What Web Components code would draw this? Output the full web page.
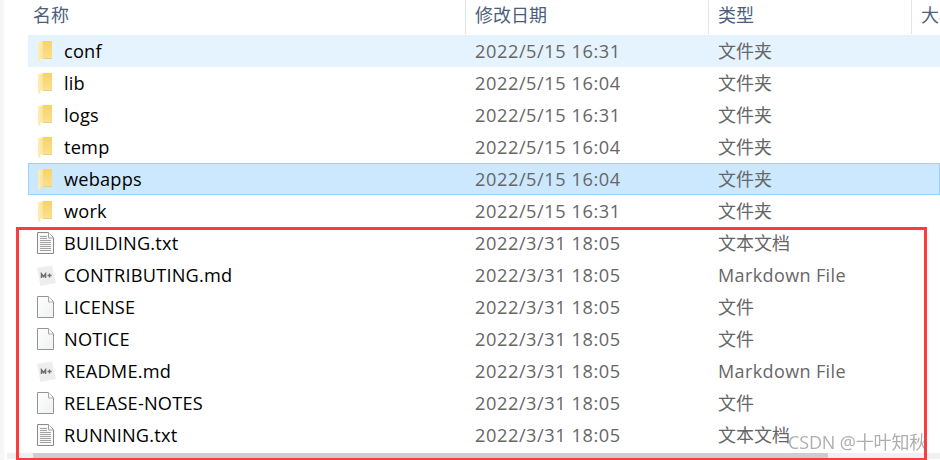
<!DOCTYPE html>
<html><head><meta charset="utf-8">
<style>
html,body{margin:0;padding:0;background:#fff;width:940px;height:460px;overflow:hidden}
body{font-family:"Open Sans","Noto Sans CJK SC",sans-serif}
</style></head><body>
<file-window>
<list-header></list-header>
<file-row name="conf" date="2022/5/15 16:31" type="文件夹" icon="folder" state="hover"></file-row>
<file-row name="lib" date="2022/5/15 16:04" type="文件夹" icon="folder"></file-row>
<file-row name="logs" date="2022/5/15 16:31" type="文件夹" icon="folder"></file-row>
<file-row name="temp" date="2022/5/15 16:04" type="文件夹" icon="folder"></file-row>
<file-row name="webapps" date="2022/5/15 16:04" type="文件夹" icon="folder" state="selected"></file-row>
<file-row name="work" date="2022/5/15 16:31" type="文件夹" icon="folder"></file-row>
<file-row name="BUILDING.txt" date="2022/3/31 18:05" type="文本文档" icon="txt"></file-row>
<file-row name="CONTRIBUTING.md" date="2022/3/31 18:05" type="Markdown File" icon="md"></file-row>
<file-row name="LICENSE" date="2022/3/31 18:05" type="文件" icon="file"></file-row>
<file-row name="NOTICE" date="2022/3/31 18:05" type="文件" icon="file"></file-row>
<file-row name="README.md" date="2022/3/31 18:05" type="Markdown File" icon="md"></file-row>
<file-row name="RELEASE-NOTES" date="2022/3/31 18:05" type="文件" icon="file"></file-row>
<file-row name="RUNNING.txt" date="2022/3/31 18:05" type="文本文档" icon="txt"></file-row>
</file-window>
<script>
const CJK='"Noto Sans CJK SC"';
class FileWindow extends HTMLElement{
 constructor(){super();this.attachShadow({mode:'open'}).innerHTML=`
 <style>
 :host{display:block;position:relative;width:940px;height:460px;overflow:hidden;background:#fff}
 .strip{position:absolute;left:0;top:0;bottom:0;width:4px;background:#f6f6f6}
 .list{display:flex;flex-direction:column;padding-left:28px}
 .track{position:absolute;left:7px;right:0;top:453px;height:6px;background:#f0f0f0}
 .thumb{position:absolute;left:26px;width:795px;top:0;bottom:0;background:#cdcdcd}
 .red{position:absolute;left:16px;top:227px;width:905px;height:228px;border:3px solid #ff3b3b}
 .mark{position:absolute;left:788px;top:430px;font:18px/24px "Open Sans",${CJK},sans-serif;color:rgba(120,120,120,.6);white-space:nowrap;letter-spacing:-.15px;filter:blur(.25px)}
 </style>
 <div class="strip"></div>
 <div class="list"><slot></slot></div>
 <div class="track"><div class="thumb"></div></div>
 <div class="red"></div>
 <div class="mark">CSDN @十叶知秋</div>`;}
}
class ListHeader extends HTMLElement{
 constructor(){super();this.attachShadow({mode:'open'}).innerHTML=`
 <style>
 :host{display:grid;grid-template-columns:437px 243px 203px 1fr;height:35px;box-sizing:border-box;font:18px/28px ${CJK},sans-serif;color:#4c607a;overflow:hidden;width:912px}
 div{padding-left:5px;height:34px;box-sizing:border-box;white-space:nowrap;overflow:hidden}
 div+div{border-left:1px solid #e5e5e5;padding-left:9px}
 </style>
 <div>名称</div><div>修改日期</div><div>类型</div><div>大小</div>`;}
}
const ICONS={
folder:`<svg width="14" height="21" viewBox="0 0 14 21"><defs><linearGradient id="b" x1="0" y1="0" x2="0" y2="1"><stop offset="0" stop-color="#f7d268"/><stop offset="1" stop-color="#fbe08e"/></linearGradient><linearGradient id="a" x1="0" y1="0" x2="1" y2="0"><stop offset="0" stop-color="#fdeeb8"/><stop offset="1" stop-color="#fbe39c"/></linearGradient></defs><path d="M5 0h9v18H5z" fill="url(#b)"/><path d="M5 17.500h9V18H5z" fill="#e9bd58"/><path d="M0 1.500 5 0v17.500l-2.500 0-.500 3.500H1L0 19.500z" fill="url(#a)"/></svg>`,
txt:`<svg width="17" height="22" viewBox="0 0 17 22"><path d="M.5.500h11l5 5v16H.5z" fill="#f8f8f8" stroke="#8a8a8a"/><path d="M11.500.5V6h5" fill="#fff" stroke="#a0a0a0"/><path d="M3 4.500h7M3 6.500h7M3 8.500h11M3 10.500h11M3 12.500h11M3 14.500h11M3 16.500h11M3 18.500h11" stroke="#a2a2a2"/></svg>`,
file:`<svg width="17" height="22" viewBox="0 0 17 22"><defs><linearGradient id="g" x1="0" y1="0" x2="1" y2="1"><stop offset="0" stop-color="#fff"/><stop offset="1" stop-color="#eef0f2"/></linearGradient></defs><path d="M.5.500h11l5 5v16H.5z" fill="url(#g)" stroke="#949494"/><path d="M11.500.5V6h5" fill="#fff" stroke="#a8a8a8"/></svg>`,
md:`<svg width="19" height="21" viewBox="0 0 19 21"><path d="M0 3 15 .500 19 18 3.500 21z" fill="#eeeeee"/><path d="M4.500 13V9l2 2.500 2-2.500v4" fill="none" stroke="#6e6e6e" stroke-width="1.500"/><path d="M10.500 10.500h4M12.500 8.500v4" stroke="#6e6e6e" stroke-width="1.300"/></svg>`
};
class FileRow extends HTMLElement{
 constructor(){super();this.attachShadow({mode:'open'}).innerHTML=`
 <style>
 :host{display:grid;grid-template-columns:437px 243px 1fr;align-items:center;height:32px;box-sizing:border-box;width:912px}
 :host([state=hover]){background:#e5f3ff}
 :host([state=selected]){background:#cce8ff;box-shadow:inset 0 0 0 1px #99d1ff}
 .n{display:flex;align-items:center;height:32px;font:18.2px/32px "Open Sans",sans-serif;color:#000;letter-spacing:.2px}
 .i{width:36px;height:32px;display:flex;align-items:center;padding-left:var(--ix,9px);box-sizing:border-box}
 .i svg{display:block}
 :host([icon=folder]) .i{--ix:10px}
 :host([icon=md]) .i{--ix:9px}
 .n span{white-space:nowrap}
 .d{padding-left:10px;font:18.2px/32px "Open Sans",sans-serif;color:#666;letter-spacing:.57px;white-space:nowrap}
 .t{padding-left:10px;font:18px/32px "Open Sans",${CJK},sans-serif;color:#666;white-space:nowrap;letter-spacing:.0px}
 :host([type="Markdown File"]) .t{letter-spacing:.38px}
 </style>
 <div class="n"><div class="i"></div><span></span></div><div class="d"></div><div class="t"></div>`;}
 connectedCallback(){const s=this.shadowRoot;
  s.querySelector('.i').innerHTML=ICONS[this.getAttribute('icon')];
  s.querySelector('.n span').textContent=this.getAttribute('name');
  s.querySelector('.d').textContent=this.getAttribute('date');
  s.querySelector('.t').textContent=this.getAttribute('type');}
}
customElements.define('file-window',FileWindow);
customElements.define('list-header',ListHeader);
customElements.define('file-row',FileRow);
</script>
</body></html>
